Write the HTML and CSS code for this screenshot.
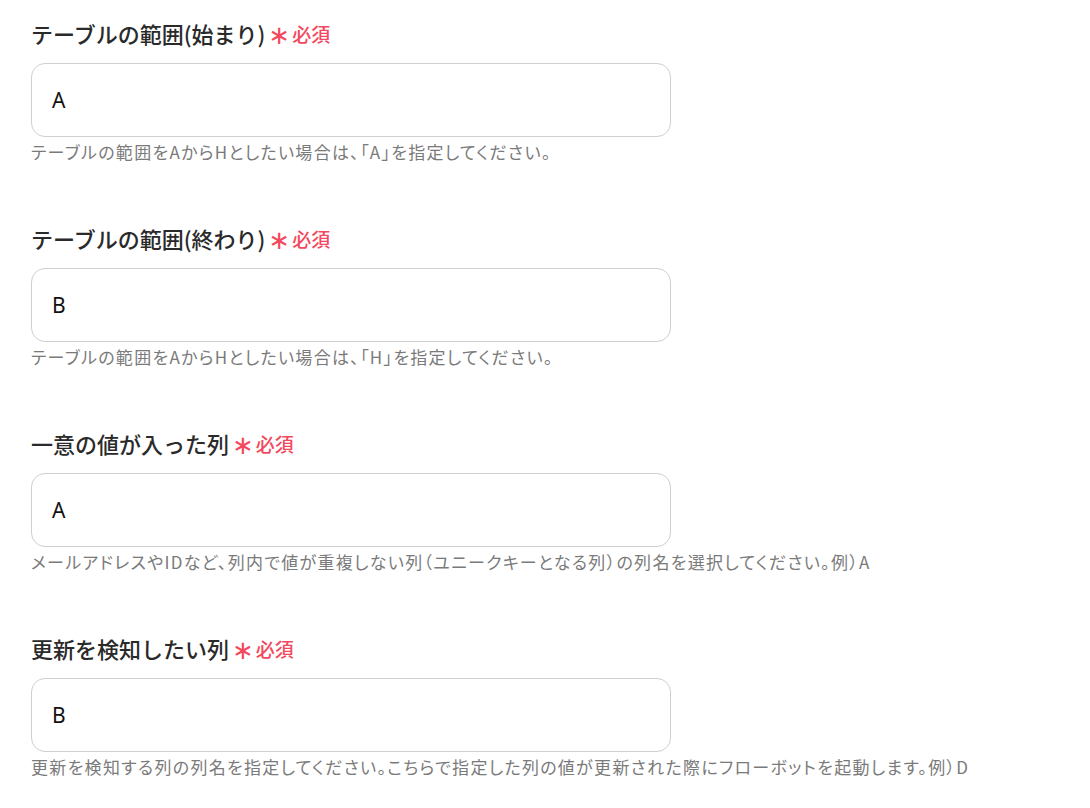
FILE: index.html
```html
<!DOCTYPE html>
<html lang="ja">
<head>
<meta charset="utf-8">
<link rel="stylesheet" href="styles.css">
</head>
<body>
<main class="form">
  <section class="field">
    <div class="label"><span class="label-text">テーブルの範囲(始まり)</span><span class="req"><span class="ast">∗</span>必須</span></div>
    <div class="input">A</div>
    <p class="help">テーブルの範囲をAからHとしたい場合は、「A」を指定してください。</p>
  </section>
  <section class="field">
    <div class="label"><span class="label-text">テーブルの範囲(終わり)</span><span class="req"><span class="ast">∗</span>必須</span></div>
    <div class="input">B</div>
    <p class="help">テーブルの範囲をAからHとしたい場合は、「H」を指定してください。</p>
  </section>
  <section class="field">
    <div class="label"><span class="label-text">一意の値が入った列</span><span class="req"><span class="ast">∗</span>必須</span></div>
    <div class="input">A</div>
    <p class="help">メールアドレスやIDなど、列内で値が重複しない列（ユニークキーとなる列）の列名を選択してください。例）A</p>
  </section>
  <section class="field">
    <div class="label"><span class="label-text">更新を検知したい列</span><span class="req"><span class="ast">∗</span>必須</span></div>
    <div class="input">B</div>
    <p class="help">更新を検知する列の列名を指定してください。こちらで指定した列の値が更新された際にフローボットを起動します。例）D</p>
  </section>
</main>
</body>
</html>
```
FILE: styles.css
```css
html, body {
  margin: 0;
  padding: 0;
  background: #ffffff;
}
body {
  font-family: "Noto Sans CJK JP", "Noto Sans", sans-serif;
  color: #222;
}
.form {
  padding: 17px 0 0 31px;
  display: flex;
  flex-direction: column;
}
.field {
  height: 205px;
  display: flex;
  flex-direction: column;
}
.label {
  display: flex;
  align-items: center;
  height: 32px;
  gap: 3px;
}
.label-text {
  font-size: 22px;
  font-weight: 500;
  color: #2a2a2a;
}
.req {
  display: flex;
  align-items: center;
  color: #f2495e;
  font-size: 19px;
  font-weight: 500;
}
.ast {
  font-size: 26px;
  font-weight: 400;
  margin-right: 2px;
  font-family: "DejaVu Sans", sans-serif;
  line-height: 1;
  position: relative;
  top: 2px;
}
.input {
  margin-top: 14px;
  box-sizing: border-box;
  width: 640px;
  height: 74px;
  border: 1px solid #cfcfcf;
  border-radius: 14px;
  display: flex;
  align-items: center;
  padding-left: 20px;
  font-family: "Noto Sans", "Noto Sans CJK JP", sans-serif;
  font-size: 21px;
  color: #111;
}
.help {
  margin: 3px 0 0 0;
  font-size: 17px;
  line-height: 24px;
  color: #7a7a7a;
  font-feature-settings: "palt";
  letter-spacing: 1.3px;
}
```
